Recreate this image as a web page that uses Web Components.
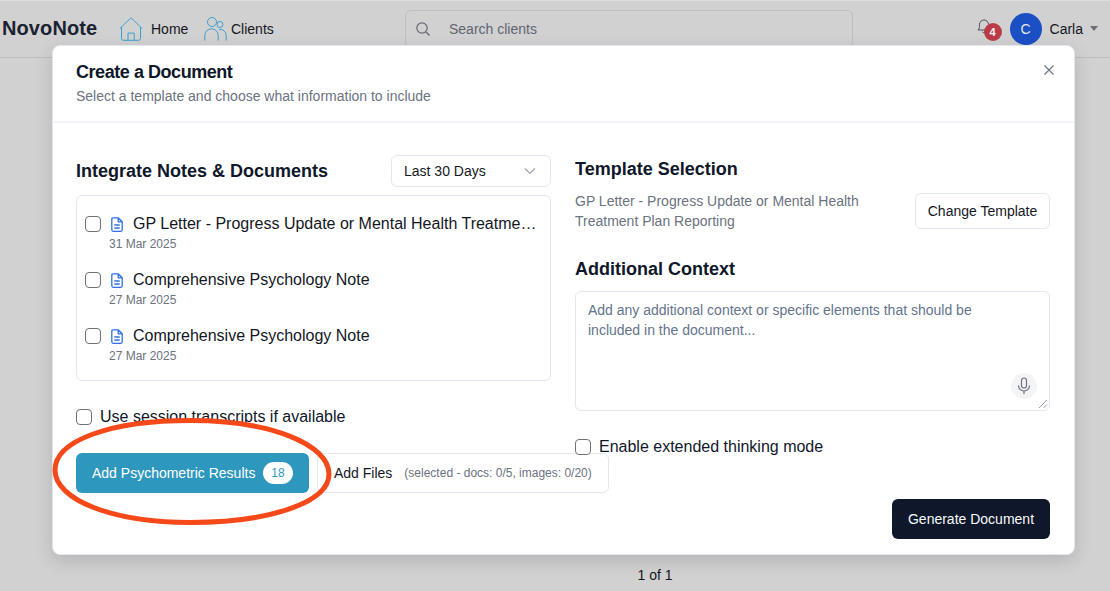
<!DOCTYPE html>
<html lang="en">
<head>
<meta charset="utf-8">
<title>NovoNote</title>
<style>
    html, body { margin: 0; height: 100%; overflow: hidden; }
    body { background: #d1d1d1; font-family: "Liberation Sans", Arial, sans-serif; color: #0f172a; }
</style>
</head>
<body>
<nn-app></nn-app>
<script>
class nnHeader extends HTMLElement {
    constructor() {
        super();
        this.attachShadow({mode: 'open'});
        this.shadowRoot.innerHTML = `
        <style>
            :host { display: flex; align-items: center; height: 57px; border-bottom: 1px solid #bdbdbd; box-shadow: inset 0 1px #dcdcdc; padding: 0 12px 0 2px; }
            .brand { font-size: 20px; font-weight: 700; color: #1a2233; width: 117px; letter-spacing: 0.1px; }
            .nav { display: flex; align-items: center; font-size: 14px; color: #14161d; }
            .nav.home { width: 85px; }
            .nav.clients { width: 201px; }
            .nav svg { display: block; }
            .search { display: flex; align-items: center; gap: 18px; width: 448px; height: 38px; box-sizing: border-box; border: 1px solid #bcbfc4; border-radius: 6px; padding: 0 9px; font-size: 14px; color: #5f6570; margin-top: 1px; }
            .right { margin-left: auto; display: flex; align-items: center; font-size: 14px; color: #14161d; }
            .bell { position: relative; width: 22px; height: 22px; margin-right: 11px; }
            .badge { position: absolute; left: 7px; top: 5px; width: 18px; height: 18px; border-radius: 50%; background: #bb3c49; color: #f4f4f4; font-size: 11px; font-weight: 700; display: flex; align-items: center; justify-content: center; }
            .avatar { width: 32px; height: 32px; border-radius: 50%; background: #1b4fc4; color: #e8e8e8; display: flex; align-items: center; justify-content: center; font-size: 14px; margin-right: 8px; }
            .caret { width: 0; height: 0; border: 4px solid transparent; border-top: 5px solid #6b6f76; border-bottom: 0; margin-left: 7px; }
        </style>
        <div class="brand">NovoNote</div>
        <div class="nav home">
            <svg width="24" height="24" viewBox="0 0 24 24" fill="none" stroke="#3f9fd0" stroke-width="1"><path d="M.8 11.500 12 .8l11 10.700M2.500 10v11.500a2 2 0 0 0 2 1.800h15a2 2 0 0 0 2-1.800V10M9 23.300v-7.200h6.200v7.200"/></svg>
            <span style="margin-left:8px">Home</span>
        </div>
        <div class="nav clients">
            <svg width="24" height="25" viewBox="0 0 24 25" fill="none" stroke="#3f9fd0" stroke-width="1"><circle cx="8" cy="6" r="4.500"/><circle cx="16" cy="8.500" r="3"/><path d="M.8 24.500v-5a6.700 6.700 0 0 1 13.400 0v5M15 13.500a6 6 0 0 1 7.200 6v5"/></svg>
            <span style="margin-left:3px">Clients</span>
        </div>
        <div class="search">
            <svg width="16" height="16" viewBox="0 0 16 16" fill="none" stroke="#62676f" stroke-width="1.200"><circle cx="7" cy="7" r="5.200"/><path d="m11 11 3.500 3.500"/></svg>
            <span>Search clients</span>
        </div>
        <div class="right">
            <div class="bell">
                <svg width="14" height="16" viewBox="0 0 14 16" fill="none" stroke="#4b4f57" stroke-width="1"><path d="M1 12c1.500-1.500 1.500-3 1.500-5.500a4.500 4.500 0 0 1 9 0V9l1.500 3zM5.500 14c.5 1 2.500 1 3 0"/></svg>
                <div class="badge">4</div>
            </div>
            <div class="avatar">C</div>
            <span>Carla</span>
            <div class="caret"></div>
        </div>`;
    }
}
customElements.define('nn-header', nnHeader);

class nnCheck extends HTMLElement {
    constructor() {
        super();
        this.attachShadow({mode: 'open'});
        this.shadowRoot.innerHTML = `
        <style>
            :host { display: flex; align-items: center; gap: 8px; font-size: 16px; color: #0f172a; }
            input { appearance: none; -webkit-appearance: none; flex: none; width: 16px; height: 16px; margin: 0; background: #fff; border: 1px solid #6f7278; border-radius: 4px; box-sizing: border-box; }
        </style>
        <input type="checkbox"><slot></slot>`;
    }
}
customElements.define('nn-check', nnCheck);

class nnNote extends HTMLElement {
    constructor() {
        super();
        this.attachShadow({mode: 'open'});
        this.shadowRoot.innerHTML = `
        <style>
            :host { display: block; height: 56px; box-sizing: border-box; padding-top: 18px; }
            .row { display: flex; align-items: center; height: 20px; font-size: 16px; color: #14171f; }
            input { appearance: none; -webkit-appearance: none; flex: none; width: 16px; height: 16px; margin: 0 10px 0 0; background: #fff; border: 1px solid #6f7278; border-radius: 4px; box-sizing: border-box; }
            svg { flex: none; margin-right: 10px; }
            .name { white-space: nowrap; overflow: hidden; min-width: 0; }
            .date { font-size: 12px; line-height: 16px; color: #6b7280; margin: 2px 0 0 24px; }
        </style>
        <div class="row">
            <input type="checkbox">
            <svg width="12" height="15" viewBox="0 0 12 15" fill="none" stroke="#2f6fed" stroke-width="1.300" stroke-linejoin="round"><path d="M1.800.8h5.400L11.200 4.800v8a1.500 1.500 0 0 1-1.500 1.500H2.300A1.500 1.500 0 0 1 .8 12.800V1.800A1 1 0 0 1 1.800.8zM7.200.8v4h4M3.300 8h5.400M3.300 11h5.400"/></svg>
            <span class="name"><slot></slot></span>
        </div>
        <div class="date"><slot name="date"></slot></div>`;
    }
}
customElements.define('nn-note', nnNote);

class nnDocModal extends HTMLElement {
    constructor() {
        super();
        this.attachShadow({mode: 'open'});
        this.shadowRoot.innerHTML = `
        <style>
            :host { display: block; position: absolute; left: 52px; top: 45px; width: 1023px; height: 510px; box-sizing: border-box; background: #fff; border: 1px solid #e2e8f0; border-radius: 8px; box-shadow: 0 6px 18px rgba(0,0,0,.14); }
            header { position: relative; height: 77px; box-sizing: border-box; padding: 15px 23px 0; border-bottom: 2px solid #f1f5f9; }
            h2 { margin: 0; font-size: 18px; line-height: 22px; font-weight: 700; color: #0f172a; letter-spacing: -0.45px; }
            header p { margin: 3px 0 0; font-size: 14px; line-height: 20px; color: #6b7280; }
            .close { position: absolute; right: 19px; top: 18px; display: block; }
            .cols { display: grid; grid-template-columns: 475px 475px; gap: 24px; padding: 32px 23px 0; }
            .cols > div { min-width: 0; }
            h3 { margin: 0; font-size: 18px; line-height: 28px; font-weight: 700; color: #0f172a; }
            .head { display: flex; align-items: center; justify-content: space-between; height: 32px; }
            .select { display: flex; align-items: center; justify-content: space-between; width: 160px; height: 32px; box-sizing: border-box; border: 1px solid #e2e8f0; border-radius: 6px; padding: 0 14px 0 12px; font-size: 14px; color: #14171f; }
            .list { height: 186px; box-sizing: border-box; margin-top: 8px; border: 1px solid #e2e8f0; border-radius: 6px; padding: 0 12px 0 8px; }
            .left-check { margin-top: 26px; height: 20px; }
            .actions { display: flex; gap: 8px; margin-top: 26px; width: 600px; }
            .psy { display: flex; align-items: center; justify-content: space-between; width: 233px; height: 40px; box-sizing: border-box; padding: 0 16px; background: #2e97bd; color: #fff; border-radius: 6px; font-size: 14px; }
            .count { display: flex; align-items: center; justify-content: center; width: 30px; height: 22px; border-radius: 11px; background: #fff; color: #2e97bd; font-size: 12px; }
            .files { display: flex; align-items: center; width: 292px; height: 40px; box-sizing: border-box; border: 1px solid #e2e8f0; border-radius: 6px; padding: 0 17px 0 16px; font-size: 14px; color: #14171f; white-space: nowrap; }
            .files small { font-size: 12px; color: #6b7280; margin-left: 12px; }
            .tpl { display: flex; align-items: flex-start; justify-content: space-between; margin-top: 10px; }
            .tpl p { margin: -2px 0 0; width: 320px; font-size: 14px; line-height: 20px; color: #6b7280; }
            .btn { display: flex; align-items: center; justify-content: center; width: 135px; height: 36px; box-sizing: border-box; border: 1px solid #e2e8f0; border-radius: 6px; font-size: 14px; color: #14171f; }
            .ctx { margin-top: 24px; }
            .area { position: relative; height: 120px; box-sizing: border-box; margin-top: 8px; border: 1px solid #e2e8f0; border-radius: 6px; padding: 8px 40px 8px 12px; font-size: 14px; line-height: 20px; color: #64748b; }
            .mic { position: absolute; right: 12px; bottom: 11px; width: 26px; height: 26px; border-radius: 50%; background: #f3f4f6; display: flex; align-items: center; justify-content: center; }
            .grip { position: absolute; right: 1px; bottom: 1px; }
            .right-check { margin-top: 26px; height: 20px; }
            .gen { position: absolute; right: 24px; bottom: 15px; display: flex; align-items: center; justify-content: center; width: 158px; height: 40px; background: #0f172a; color: #f8fafc; border-radius: 6px; font-size: 14px; font-weight: 500; }
        </style>
        <header>
            <h2>Create a Document</h2>
            <p>Select a template and choose what information to include</p>
            <svg class="close" width="12" height="12" viewBox="0 0 12 12" fill="none" stroke="#6b7280" stroke-width="1.100"><path d="m1.500 1.500 9 9M10.500 1.500l-9 9"/></svg>
        </header>
        <div class="cols">
            <div>
                <div class="head">
                    <h3>Integrate Notes &amp; Documents</h3>
                    <div class="select">
                        <span>Last 30 Days</span>
                        <svg width="12" height="8" viewBox="0 0 12 8" fill="none" stroke="#9ca3af" stroke-width="1.200"><path d="m1 1.500 5 5 5-5"/></svg>
                    </div>
                </div>
                <div class="list"><slot name="notes"></slot></div>
                <nn-check class="left-check">Use session transcripts if available</nn-check>
                <div class="actions">
                    <div class="psy"><span>Add Psychometric Results</span><span class="count">18</span></div>
                    <div class="files"><span>Add Files</span><small>(selected - docs: 0/5, images: 0/20)</small></div>
                </div>
            </div>
            <div>
                <h3>Template Selection</h3>
                <div class="tpl">
                    <p>GP Letter - Progress Update or Mental Health Treatment Plan Reporting</p>
                    <div class="btn">Change Template</div>
                </div>
                <h3 class="ctx">Additional Context</h3>
                <div class="area">
                    Add any additional context or specific elements that should be included in the document...
                    <div class="mic">
                        <svg width="14" height="18" viewBox="0 0 14 18" fill="none" stroke="#6b7280" stroke-width="1.200"><rect x="4.500" y="1" width="5" height="10" rx="2.500"/><path d="M1.500 8.500a5.500 5.500 0 0 0 11 0M7 14v3"/></svg>
                    </div>
                    <svg class="grip" width="10" height="10" viewBox="0 0 10 10" fill="none" stroke="#9a9ea5" stroke-width="1"><path d="M1 9 9 1M5.500 9 9 5.500"/></svg>
                </div>
                <nn-check class="right-check">Enable extended thinking mode</nn-check>
            </div>
        </div>
        <div class="gen">Generate Document</div>`;
    }
}
customElements.define('nn-doc-modal', nnDocModal);

class nnApp extends HTMLElement {
    constructor() {
        super();
        this.attachShadow({mode: 'open'});
        this.shadowRoot.innerHTML = `
        <style>
            :host { display: flex; flex-direction: column; height: 591px; position: relative; overflow: hidden; }
            main { flex: 1; display: flex; align-items: flex-end; justify-content: center; padding: 0 0 8px 200px; font-size: 14px; color: #14161d; }
            svg.mark { position: absolute; left: 0; top: 0; pointer-events: none; }
        </style>
        <nn-header></nn-header>
        <main>1 of 1</main>
        <nn-doc-modal>
            <nn-note slot="notes">GP Letter - Progress Update or Mental Health Treatme…<span slot="date">31 Mar 2025</span></nn-note>
            <nn-note slot="notes">Comprehensive Psychology Note<span slot="date">27 Mar 2025</span></nn-note>
            <nn-note slot="notes">Comprehensive Psychology Note<span slot="date">27 Mar 2025</span></nn-note>
        </nn-doc-modal>
        <svg class="mark" width="1110" height="591" fill="none" stroke="#f6491a" stroke-width="5">
            <path d="M55 470C55 440 112 420.500 190 420.500C272 420.500 329 445 329 474C329 503 268 522.500 190 522.500C113 522.500 55 500 55 470Z"/>
        </svg>`;
    }
}
customElements.define('nn-app', nnApp);
</script>
</body>
</html>
